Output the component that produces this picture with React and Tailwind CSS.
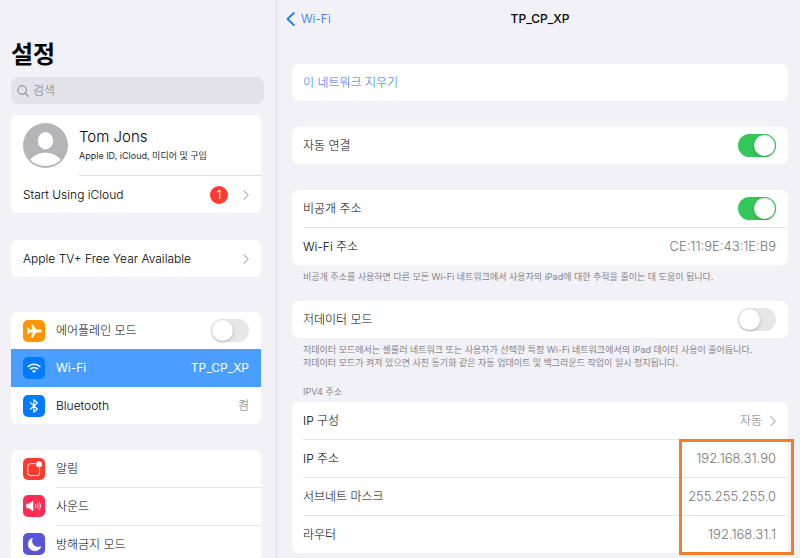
import React, { useState } from 'react';
import { IoMoon } from 'react-icons/io5';

const Chevron = () => (
  <svg width="6" height="10" viewBox="0 0 6 10" fill="none" stroke="#bfbfc3" strokeWidth="1.3" strokeLinecap="round" strokeLinejoin="round">
    <path d="M1 0.8 5.2 5 1 9.2" />
  </svg>
);

const Toggle = ({ id, defaultOn = false }) => {
  const [on, setOn] = useState(defaultOn);
  return (
    <input
      id={id}
      type="checkbox"
      role="switch"
      checked={on}
      onChange={() => setOn(!on)}
      className="h-[23px] w-[38px] shrink-0 appearance-none rounded-full bg-[#e6e6e8] p-px before:block before:size-[21px] before:rounded-full before:bg-white before:shadow-[0_1px_3px_rgba(0,0,0,0.25)] before:content-[''] checked:bg-[#34c759] checked:before:translate-x-[15px]"
    />
  );
};

const AirplaneIcon = () => (
  <svg width="22" height="22" viewBox="0 0 22 22" fill="white" stroke="white" strokeWidth="0.5" strokeLinejoin="round">
    <path d="M18.6 11C18.6 11.7 17.5 12.2 16.4 12.2H13.2L9.6 17.4H8.4L9.9 12.2H6.8L5.3 14H4.3L4.9 11 4.3 8H5.3L6.8 9.8H9.9L8.4 4.6H9.6L13.2 9.8H16.4C17.5 9.8 18.6 10.3 18.6 11Z" />
  </svg>
);

const WifiIcon = () => (
  <svg width="22" height="22" viewBox="0 0 22 22" fill="none" stroke="white" strokeWidth="1.6">
    <path d="M4.7 9.8C8.3 6.4 13.7 6.4 17.3 9.8" />
    <path d="M7.1 12.2C9.3 10.1 12.7 10.1 14.9 12.2" />
    <path d="M11 16 8.9 13.9C10.1 12.9 11.9 12.9 13.1 13.9Z" fill="white" stroke="none" />
  </svg>
);

const BluetoothIcon = () => (
  <svg width="22" height="22" viewBox="0 0 22 22" fill="none" stroke="white" strokeWidth="1.2" strokeLinejoin="round" strokeLinecap="round">
    <path d="M7.3 7.6 14.3 14 10.8 17.2V4.6L14.3 7.8 7.3 14.2" />
  </svg>
);

const NotificationIcon = () => (
  <svg width="22" height="22" viewBox="0 0 22 22" fill="none">
    <path d="M12.6 5.6H7.4A2.6 2.6 0 0 0 4.8 8.2V15A2.6 2.6 0 0 0 7.4 17.6H14A2.6 2.6 0 0 0 16.6 15V9.6" stroke="white" strokeWidth="0.9" />
    <circle cx="16" cy="6.2" r="3" fill="white" />
  </svg>
);

const SoundIcon = () => (
  <svg width="22" height="22" viewBox="0 0 22 22" fill="none" stroke="white" strokeWidth="1" strokeLinecap="round">
    <path d="M3.8 8.8H6L9.6 6.1Q10.3 5.7 10.3 6.5V15.5Q10.3 16.3 9.6 15.9L6 13.2H3.8Q3.2 13.2 3.2 12.6V9.4Q3.2 8.8 3.8 8.8Z" fill="white" stroke="none" />
    <path d="M12.5 9.5Q13.4 11 12.5 12.5M14.4 8.3Q16 11 14.4 13.7M16.4 7Q18.8 11 16.4 15" />
  </svg>
);

const NavRow = ({ icon, color, label, id, divider, selected, children }) => {
  const Tag = id ? 'div' : 'button';
  return (
    <Tag className={`flex w-full items-center gap-[11px] pl-3 text-left ${selected ? 'bg-[#4a9eff] font-normal text-white' : ''}`}>
      <span className={`flex size-[22px] shrink-0 items-center justify-center rounded-[5px] text-white ${color}`}>{icon}</span>
      <span
        className={`flex flex-1 items-center justify-between pr-3 ${selected || divider ? 'h-[38px]' : 'h-[37px]'} ${
          divider ? 'border-t border-[#e5e5e7]' : ''
        }`}
      >
        {id ? <label htmlFor={id}>{label}</label> : <span>{label}</span>}
        {children}
      </span>
    </Tag>
  );
};

const Sidebar = () => (
  <aside className="w-[277px] shrink-0 overflow-hidden border-r border-[#dcdce0] pr-[15px] pl-[11px]">
    <h1 className="mt-[38px] text-2xl leading-[34px] font-bold">설정</h1>
    <div className="mt-[5px] -mr-[3px] flex h-[27px] items-center gap-1 rounded-[7px] bg-[#e3e2e8] px-1.5">
      <svg width="12" height="12" viewBox="0 0 13 13" fill="none" stroke="#85858a" strokeWidth="1.1" strokeLinecap="round">
        <circle cx="5.5" cy="5.5" r="4.6" />
        <path d="M9 9 12.3 12.3" />
      </svg>
      <input
        type="search"
        aria-label="검색"
        placeholder="검색"
        className="min-w-0 flex-1 bg-transparent outline-none placeholder:text-[#7c7c81]"
      />
    </div>

    <div className="mt-[11px] rounded-[7px] bg-white">
      <button className="flex h-[60px] w-full items-center gap-[11px] pl-3 text-left">
        <svg className="shrink-0" width="45" height="45" viewBox="0 0 45 45">
          <circle cx="22.5" cy="22.5" r="22.5" fill="#b5b5b8" />
          <ellipse cx="22.5" cy="17.7" rx="7.7" ry="8.7" fill="white" />
          <path d="M7.3 36.8C11 32 16.5 29.8 22.5 29.8S34 32 37.7 36.8C33.8 40.8 28.5 43 22.5 43S11.2 40.8 7.3 36.8Z" fill="white" />
        </svg>
        <span className="flex flex-col">
          <span className="text-[15px] leading-5">Tom Jons</span>
          <span className="text-[9px] leading-[17px] font-normal text-[#2a2a2a]">Apple ID, iCloud, 미디어 및 구입</span>
        </span>
      </button>
      <hr className="ml-[68px] border-[#e0e0e2]" />
      <button className="flex h-[37px] w-full items-center px-3 text-left">
        <span className="flex-1">Start Using iCloud</span>
        <span className="mr-[15px] flex size-[18px] items-center justify-center rounded-full bg-[#ff3b30] font-normal text-white">1</span>
        <Chevron />
      </button>
    </div>

    <button className="mt-[27px] flex h-[37px] w-full items-center justify-between rounded-[7px] bg-white px-3 text-left">
      Apple TV+ Free Year Available
      <Chevron />
    </button>

    <div className="mt-[35px] rounded-[7px] bg-white">
      <NavRow icon={<AirplaneIcon />} color="bg-[#ff9500]" label="에어플레인 모드" id="airplane">
        <Toggle id="airplane" />
      </NavRow>
      <NavRow icon={<WifiIcon />} color="bg-[#007aff]" label="Wi-Fi" selected>
        <span>TP_CP_XP</span>
      </NavRow>
      <NavRow icon={<BluetoothIcon />} color="bg-[#007aff]" label="Bluetooth">
        <span className="text-[#75757a]">켬</span>
      </NavRow>
    </div>

    <div className="mt-[26px] rounded-t-[7px] bg-white">
      <NavRow icon={<NotificationIcon />} color="bg-[#ff3b30]" label="알림" />
      <NavRow icon={<SoundIcon />} color="bg-[#ff2d55]" label="사운드" divider />
      <NavRow icon={<IoMoon size={15} />} color="bg-[#5856d6]" label="방해금지 모드" divider />
    </div>
  </aside>
);

const Card = ({ children, className = '' }) => (
  <div className={`rounded-[7px] bg-white pl-[11px] ${className}`}>{children}</div>
);

const DetailRow = ({ label, id, divider, children }) => (
  <div className={`flex items-center justify-between pr-3 ${divider ? 'h-[38px] border-t border-[#e5e5e7]' : 'h-[37px]'}`}>
    {id ? <label htmlFor={id}>{label}</label> : <span>{label}</span>}
    <span className="flex items-center gap-2 text-[#75757a]">{children}</span>
  </div>
);

const Value = ({ children }) => <span className="text-[13px]">{children}</span>;

const Note = ({ children }) => (
  <p className="mt-[5px] pl-[11px] text-[9px] leading-[13px] font-normal text-[#85858a]">{children}</p>
);

const NetworkDetail = () => (
  <main className="min-w-0 flex-1 overflow-hidden pr-3 pl-[15px]">
    <header className="grid h-[37px] grid-cols-3 items-center">
      <button className="-ml-1.5 flex items-center gap-1.5 text-[#1f6ff5]">
        <svg width="9" height="14" viewBox="0 0 9 14" fill="none" stroke="#1a7cff" strokeWidth="1.8" strokeLinecap="round" strokeLinejoin="round">
          <path d="M7.8 1 1.5 7l6.3 6" />
        </svg>
        Wi-Fi
      </button>
      <h2 className="text-center font-medium">TP_CP_XP</h2>
    </header>

    <Card className="mt-[27px]">
      <button className="flex h-[37px] w-full items-center text-[#1f6ff5]">이 네트워크 지우기</button>
    </Card>

    <Card className="mt-[26px]">
      <DetailRow label="자동 연결" id="auto-join">
        <Toggle id="auto-join" defaultOn />
      </DetailRow>
    </Card>

    <Card className="mt-[26px]">
      <DetailRow label="비공개 주소" id="private-address">
        <Toggle id="private-address" defaultOn />
      </DetailRow>
      <DetailRow label="Wi-Fi 주소" divider>
        <Value>CE:11:9E:43:1E:B9</Value>
      </DetailRow>
    </Card>
    <Note>비공개 주소를 사용하면 다른 모든 Wi-Fi 네트워크에서 사용자의 iPad에 대한 추적을 줄이는 데 도움이 됩니다.</Note>

    <Card className="mt-[18px]">
      <DetailRow label="저데이터 모드" id="low-data">
        <Toggle id="low-data" />
      </DetailRow>
    </Card>
    <Note>
      저데이터 모드에서는 셀룰러 네트워크 또는 사용자가 선택한 특정 Wi-Fi 네트워크에서의 iPad 데이터 사용이 줄어듭니다.
      <br />
      저데이터 모드가 켜져 있으면 사진 동기화 같은 자동 업데이트 및 백그라운드 작업이 일시 정지됩니다.
    </Note>

    <h3 className="mt-4 mb-1 pl-[11px] text-[9px] leading-[13px] font-normal text-[#85858a]">IPV4 주소</h3>
    <Card className="relative">
      <DetailRow label="IP 구성">
        자동
        <Chevron />
      </DetailRow>
      <DetailRow label="IP 주소" divider>
        <Value>192.168.31.90</Value>
      </DetailRow>
      <DetailRow label="서브네트 마스크" divider>
        <Value>255.255.255.0</Value>
      </DetailRow>
      <DetailRow label="라우터" divider>
        <Value>192.168.31.1</Value>
      </DetailRow>
      {/* highlight around the assigned addresses */}
      <div className="pointer-events-none absolute top-[37px] -right-1.5 -bottom-0.5 w-[115px] border-3 border-[#ee7f2d]" />
    </Card>
  </main>
);

export default function App() {
  return (
    <div className="flex h-screen overflow-hidden bg-[#f2f1f7] font-['Inter','Noto_Sans_CJK_KR',sans-serif] text-[12px] font-light text-black">
      <Sidebar />
      <NetworkDetail />
    </div>
  );
}
